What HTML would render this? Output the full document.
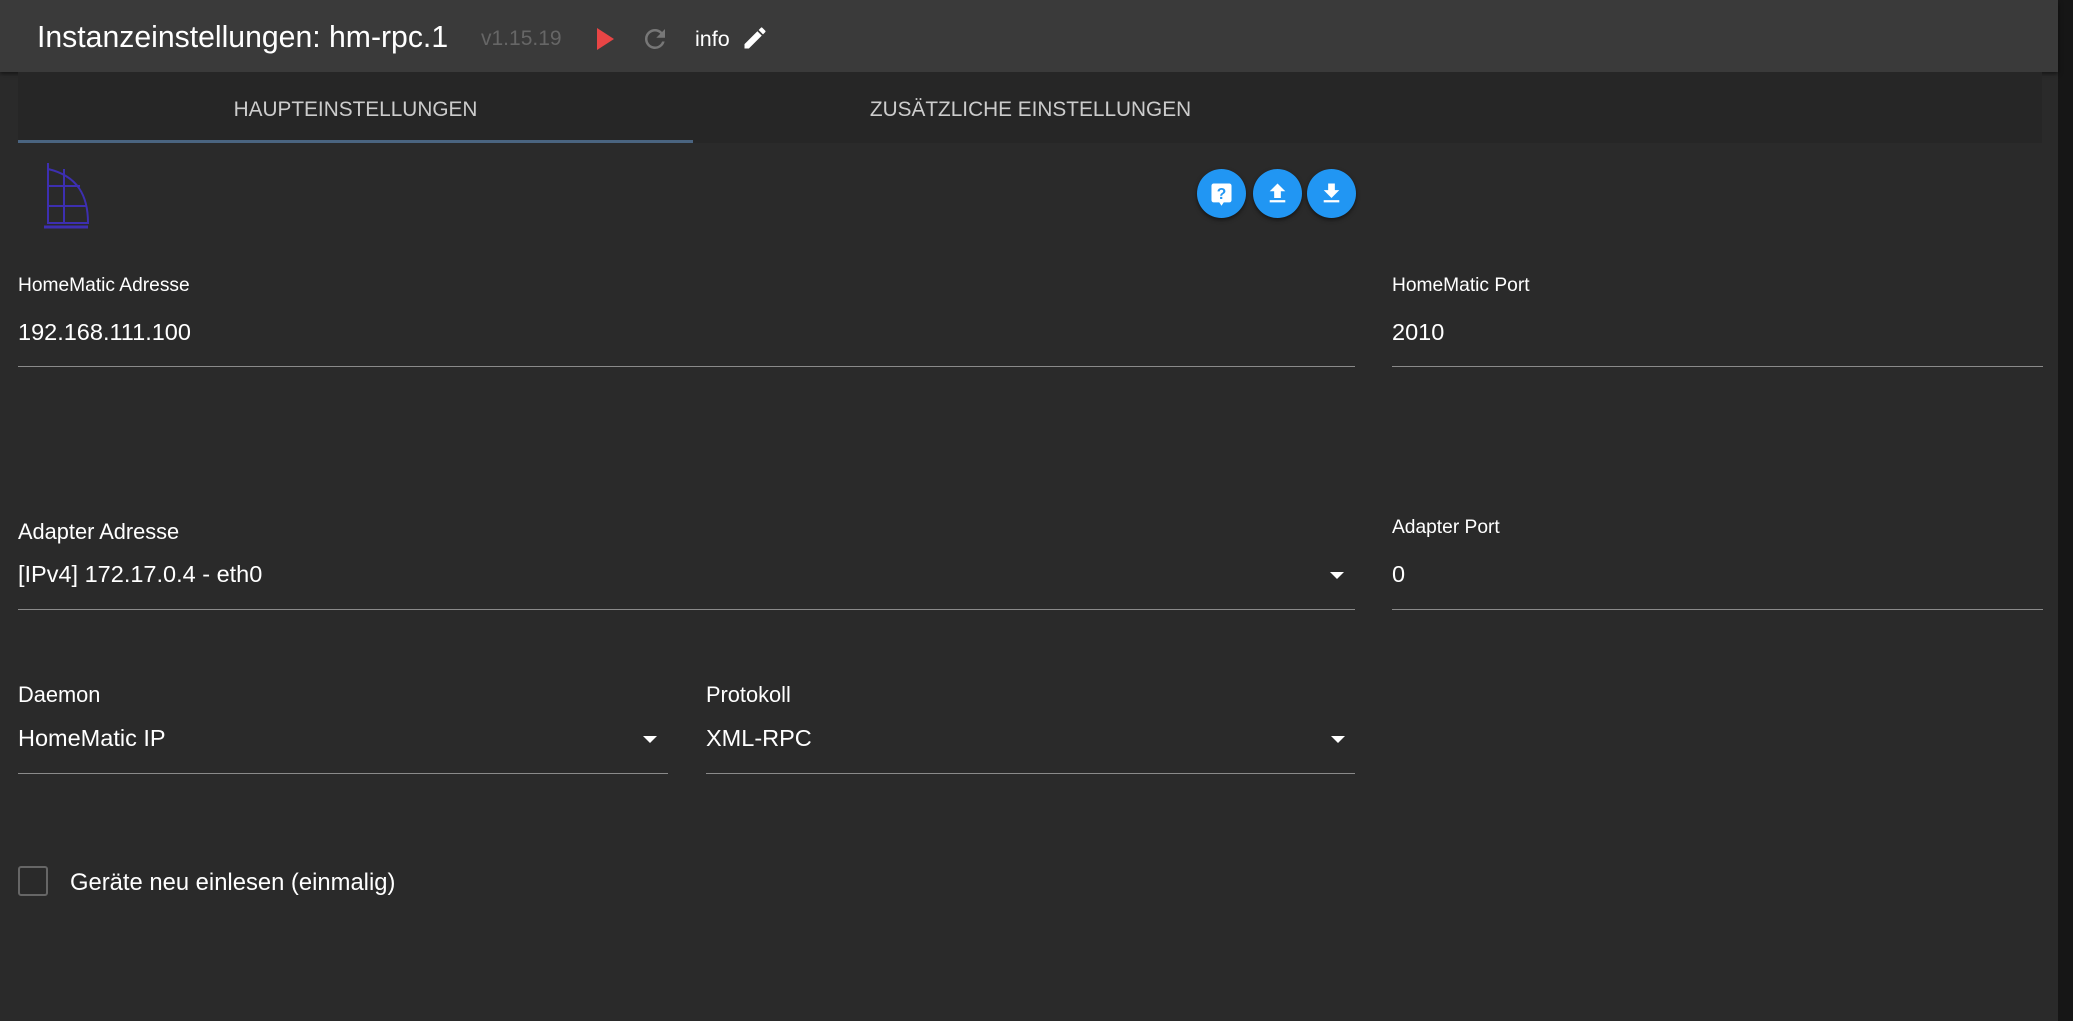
<!DOCTYPE html>
<html><head><meta charset="utf-8"><style>
body{margin:0;width:2073px;height:1021px;background:#161616;overflow:hidden;font-family:"Liberation Sans",sans-serif;color:#fff;position:relative}
.a{position:absolute;white-space:nowrap}
.panel{position:absolute;left:0;top:0;width:2058px;height:1021px;background:#2a2a2a}
.hdr{position:absolute;left:0;top:0;width:2058px;height:72px;background:#3a3a3a;box-shadow:0 2px 4px rgba(0,0,0,.5)}
.tabs{position:absolute;left:18px;top:72px;width:2024px;height:71px;background:#262626}
.lbl{font-size:19.2px;color:#fff}
.val{font-size:23.5px;color:#fff}
.line{position:absolute;height:1px;background:#8a8a8a}
.btn{position:absolute;width:49px;height:49px;border-radius:50%;background:#2196f3;top:169px;box-shadow:0 2px 4px rgba(0,0,0,.5)}
.arr{position:absolute;width:0;height:0;border-left:7px solid transparent;border-right:7px solid transparent;border-top:7px solid #fff}
</style></head><body>
<div class="panel"></div>
<div class="hdr"></div>
<div class="a" style="left:37px;top:21px;font-size:30.2px;line-height:34px">Instanzeinstellungen: hm-rpc.1</div>
<div class="a" style="left:481px;top:27px;font-size:21px;line-height:24px;color:#666">v1.15.19</div>
<svg class="a" style="left:596px;top:28px" width="20" height="22" viewBox="0 0 20 22"><path d="M1 0L18 11L1 22Z" fill="#e84545"/></svg>
<svg class="a" style="left:640px;top:24px" width="30" height="30" viewBox="0 0 24 24"><path d="M17.65 6.35A7.96 7.96 0 0 0 12 4a8 8 0 1 0 7.73 10h-2.08A6 6 0 1 1 12 6c1.66 0 3.14.69 4.22 1.78L13 11h7V4z" fill="#777"/></svg>
<div class="a" style="left:695px;top:27px;font-size:21.5px;line-height:24px">info</div>
<svg class="a" style="left:741px;top:24px" width="28" height="28" viewBox="0 0 24 24"><path d="M3 17.25V21h3.75L17.81 9.94l-3.75-3.75zM20.71 7.04a1 1 0 0 0 0-1.41l-2.34-2.34a1 1 0 0 0-1.41 0l-1.83 1.83 3.75 3.75z" fill="#fff"/></svg>
<div class="tabs"></div>
<div class="a" style="left:18px;width:675px;text-align:center;top:98px;font-size:20.8px;line-height:24px;color:#ccc">HAUPTEINSTELLUNGEN</div>
<div class="a" style="left:693px;width:675px;text-align:center;top:98px;font-size:20.8px;line-height:24px;color:#ccc">ZUSÄTZLICHE EINSTELLUNGEN</div>
<div class="a" style="left:18px;top:140px;width:675px;height:3px;background:#4a6480"></div>
<svg class="a" style="left:40px;top:161px" width="52" height="70" viewBox="0 0 52 70" fill="none" stroke="#3d2fb0" stroke-width="2"><path d="M8 2V62H48C48 35 38 15 8 8"/><path d="M8 25H40M8 45H46M24 8V62"/><path d="M4 66H48" stroke-width="3"/></svg>
<div class="btn" style="left:1197px"><svg width="49" height="49" viewBox="-10 -10 44 44"><path d="M5 3h14a2 2 0 0 1 2 2v13a2 2 0 0 1-2 2h-5l-2 3-2-3H5a2 2 0 0 1-2-2V5a2 2 0 0 1 2-2z" fill="#fff"/><text x="12" y="17" font-size="14" font-weight="bold" text-anchor="middle" fill="#2196f3" font-family="Liberation Sans">?</text></svg></div>
<div class="btn" style="left:1253px"><svg width="49" height="49" viewBox="-10 -10 44 44"><path d="M9 16h6v-6h4l-7-7-7 7h4zM5 18h14v2H5z" fill="#fff"/></svg></div>
<div class="btn" style="left:1307px"><svg width="49" height="49" viewBox="-10 -10 44 44"><path d="M19 9h-4V3H9v6H5l7 7zM5 18v2h14v-2z" fill="#fff"/></svg></div>

<div class="a lbl" style="left:18px;top:275px">HomeMatic Adresse</div>
<div class="a val" style="left:18px;top:319px">192.168.111.100</div>
<div class="line" style="left:18px;top:366px;width:1337px"></div>
<div class="a lbl" style="left:1392px;top:275px">HomeMatic Port</div>
<div class="a val" style="left:1392px;top:319px">2010</div>
<div class="line" style="left:1392px;top:366px;width:651px"></div>

<div class="a" style="left:18px;top:519px;font-size:21.8px">Adapter Adresse</div>
<div class="a val" style="left:18px;top:561px">[IPv4] 172.17.0.4 - eth0</div>
<div class="arr" style="left:1330px;top:572px"></div>
<div class="line" style="left:18px;top:609px;width:1337px"></div>
<div class="a lbl" style="left:1392px;top:517px">Adapter Port</div>
<div class="a val" style="left:1392px;top:561px">0</div>
<div class="line" style="left:1392px;top:609px;width:651px"></div>

<div class="a" style="left:18px;top:682px;font-size:21.8px">Daemon</div>
<div class="a val" style="left:18px;top:725px">HomeMatic IP</div>
<div class="arr" style="left:643px;top:736px"></div>
<div class="line" style="left:18px;top:773px;width:650px"></div>
<div class="a" style="left:706px;top:682px;font-size:21.8px">Protokoll</div>
<div class="a val" style="left:706px;top:725px">XML-RPC</div>
<div class="arr" style="left:1331px;top:736px"></div>
<div class="line" style="left:706px;top:773px;width:649px"></div>

<div class="a" style="left:18px;top:866px;width:26px;height:26px;border:2px solid #666;border-radius:3px"></div>
<div class="a" style="left:70px;top:869px;font-size:23.8px">Geräte neu einlesen (einmalig)</div>
</body></html>
